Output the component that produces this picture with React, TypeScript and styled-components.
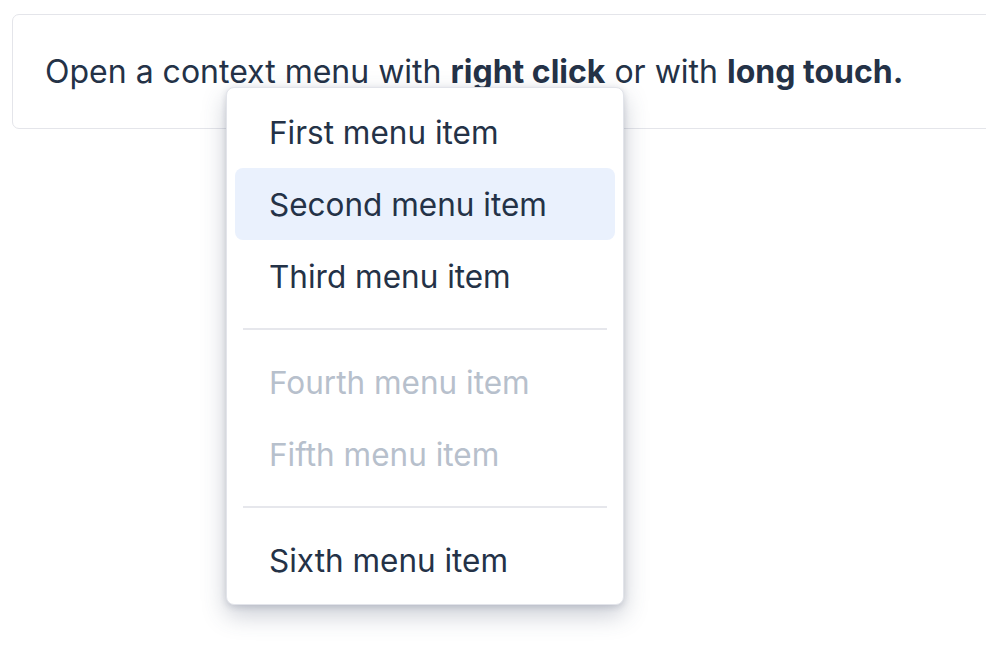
import React from "react";
import styled, { createGlobalStyle } from "styled-components";

const Global = createGlobalStyle`
  html, body { margin: 0; padding: 0; background: #ffffff; overflow: hidden; }
  body { font-family: Inter, "Noto Sans", sans-serif; color: #243247; }
`;

const Page = styled.div`
  position: relative;
  width: 986px;
  height: 670px;
  padding: 14px 0 0 12px;
  box-sizing: border-box;
`;

const Panel = styled.div`
  width: 1000px;
  box-sizing: border-box;
  border: 1px solid #e4e5ea;
  border-radius: 7px;
  padding: 32px 32px;
  font-size: 32px;
  line-height: 49px;
  color: #243247;
`;

const Strong = styled.b`
  font-weight: 700;
`;

const Menu = styled.div`
  position: absolute;
  left: 226px;
  top: 87px;
  width: 398px;
  box-sizing: border-box;
  padding: 8px;
  background: #ffffff;
  border: 1px solid #e2e4ea;
  border-radius: 8px;
  box-shadow: 0 10px 24px rgba(60, 72, 100, 0.28), 0 2px 6px rgba(60, 72, 100, 0.18);
  display: flex;
  flex-direction: column;
`;

const Item = styled.div<{ $active?: boolean; $disabled?: boolean }>`
  height: 72px;
  display: flex;
  align-items: center;
  padding-left: 34px;
  border-radius: 8px;
  font-size: 31.5px;
  color: ${(p) => (p.$disabled ? "#b7c0cc" : "#243247")};
  background: ${(p) => (p.$active ? "#eaf1fd" : "transparent")};
`;

const Separator = styled.div`
  height: 2px;
  background: #e6e7ec;
  margin: 16px 8px 16px;
`;

export default function App() {
  return (
    <>
      <Global />
      <Page>
        <Panel>
          Open a context menu with <Strong>right click</Strong> or with <Strong>long touch.</Strong>
        </Panel>
        <Menu>
          <Item>First menu item</Item>
          <Item $active>Second menu item</Item>
          <Item>Third menu item</Item>
          <Separator />
          <Item $disabled>Fourth menu item</Item>
          <Item $disabled>Fifth menu item</Item>
          <Separator />
          <Item>Sixth menu item</Item>
        </Menu>
      </Page>
    </>
  );
}
